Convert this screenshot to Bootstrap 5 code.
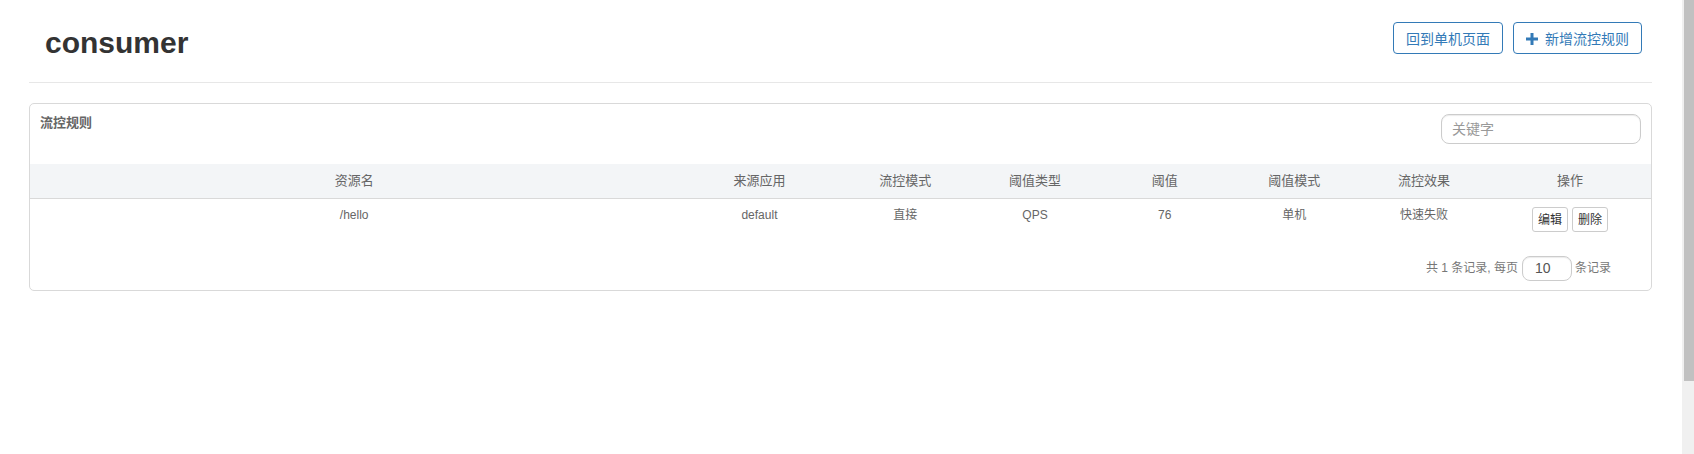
<!DOCTYPE html>
<html lang="zh-CN">
<head>
<meta charset="utf-8">
<meta name="viewport" content="width=device-width, initial-scale=1">
<title>consumer</title>
<link href="https://cdn.jsdelivr.net/npm/bootstrap@5.3.0/dist/css/bootstrap.min.css" rel="stylesheet">
<style>
  body { font-family: "Liberation Sans", "Noto Sans CJK SC", sans-serif; font-size: 12px; line-height: 16px; color: #666; background: #fff; }
  .page-content { padding: 0 30px 0 29px; }
  .page-head { height: 83px; padding: 22px 10px 0 16px; border-bottom: 1px solid #e7e7e7; }
  .page-title { font-size: 30px; line-height: 42px; font-weight: 700; color: #333; }
  .head-actions { gap: 10px; }
  .head-btn { --bs-btn-color: #337ab7; --bs-btn-border-color: #337ab7; --bs-btn-hover-bg: #337ab7; --bs-btn-hover-border-color: #337ab7; --bs-btn-padding-x: 12px; --bs-btn-font-size: 14px; --bs-btn-line-height: 20px; --bs-btn-border-radius: 4px; padding-top: 6px; padding-bottom: 4px; }
  .head-btn svg { width: 12px; height: 12px; margin-right: 7px; }
  .rules-panel { margin-top: 20px; border: 1px solid #d9d9d9; border-radius: 5px; }
  .panel-top { padding: 10px 10px 20px; }
  .panel-name { font-size: 13px; line-height: 18px; font-weight: 700; color: #666; }
  .field { border: 1px solid #ccc; border-radius: 8px; font-size: 14px; color: #555; box-shadow: inset 0 1px 1px rgba(0,0,0,.08); }
  .search-field { width: 200px; height: 30px; padding: 4px 10px; }
  .search-field::placeholder { color: #999; }
  .size-field { width: 50px; height: 25px; padding: 2px 12px; margin: 0 3px 0 4px; }
  .rules-table { table-layout: fixed; text-align: center; --bs-table-color: #666; color: #666; }
  .rules-table th { height: 34px; padding: 0; vertical-align: middle; font-size: 13px; font-weight: 400; line-height: 18px; background: #f3f5f7; border-bottom: 1px solid #d9d9d9; }
  .rules-table td { padding: 8px 0; border: 0; }
  .col-name { width: 40%; }
  .col-wide { width: 10%; }
  .col-std { width: 8%; }
  .row-btn { --bs-btn-color: #333; --bs-btn-border-color: #ccc; --bs-btn-bg: #fff; --bs-btn-hover-color: #333; --bs-btn-hover-bg: #eee; --bs-btn-hover-border-color: #adadad; --bs-btn-padding-x: 5px; --bs-btn-font-size: 12px; --bs-btn-line-height: 17px; --bs-btn-border-radius: 3px; padding-top: 4px; padding-bottom: 2px; }
  .pager { padding: 16px 40px 9px 0; color: #777; }
  .scroll-track { width: 12px; padding-left: 2px; background: #f0f0f0; }
  .scroll-thumb { height: 84vh; background: #c1c1c1; }
</style>
</head>
<body>
<div class="d-flex min-vh-100">
  <main class="page-content flex-grow-1">
    <header class="page-head d-flex justify-content-between align-items-start">
      <h1 class="page-title m-0">consumer</h1>
      <div class="head-actions d-flex">
        <button type="button" class="btn head-btn">回到单机页面</button>
        <button type="button" class="btn head-btn d-flex align-items-center"><svg viewBox="0 0 12 12" fill="currentColor" aria-hidden="true"><path d="M4.500 0h3v4.500H12v3H7.500V12h-3V7.500H0v-3h4.500z"/></svg>新增流控规则</button>
      </div>
    </header>
    <section class="rules-panel">
      <div class="panel-top d-flex justify-content-between align-items-start">
        <h2 class="panel-name m-0">流控规则</h2>
        <input type="text" class="field search-field" placeholder="关键字" aria-label="关键字">
      </div>
      <table class="table rules-table m-0">
        <thead>
          <tr>
            <th scope="col" class="col-name">资源名</th>
            <th scope="col" class="col-wide">来源应用</th>
            <th scope="col" class="col-std">流控模式</th>
            <th scope="col" class="col-std">阈值类型</th>
            <th scope="col" class="col-std">阈值</th>
            <th scope="col" class="col-std">阈值模式</th>
            <th scope="col" class="col-std">流控效果</th>
            <th scope="col" class="col-wide">操作</th>
          </tr>
        </thead>
        <tbody>
          <tr>
            <td>/hello</td>
            <td>default</td>
            <td>直接</td>
            <td>QPS</td>
            <td>76</td>
            <td>单机</td>
            <td>快速失败</td>
            <td>
              <div class="d-flex justify-content-center gap-1">
                <button type="button" class="btn row-btn">编辑</button>
                <button type="button" class="btn row-btn">删除</button>
              </div>
            </td>
          </tr>
        </tbody>
      </table>
      <div class="pager d-flex justify-content-end align-items-center">
        <label for="page-size">共 1 条记录, 每页</label>
        <input type="text" id="page-size" class="field size-field" value="10">
        <span>条记录</span>
      </div>
    </section>
  </main>
  <div class="scroll-track flex-shrink-0"><div class="scroll-thumb"></div></div>
</div>
<script src="https://cdn.jsdelivr.net/npm/bootstrap@5.3.0/dist/js/bootstrap.bundle.min.js"></script>
</body>
</html>
